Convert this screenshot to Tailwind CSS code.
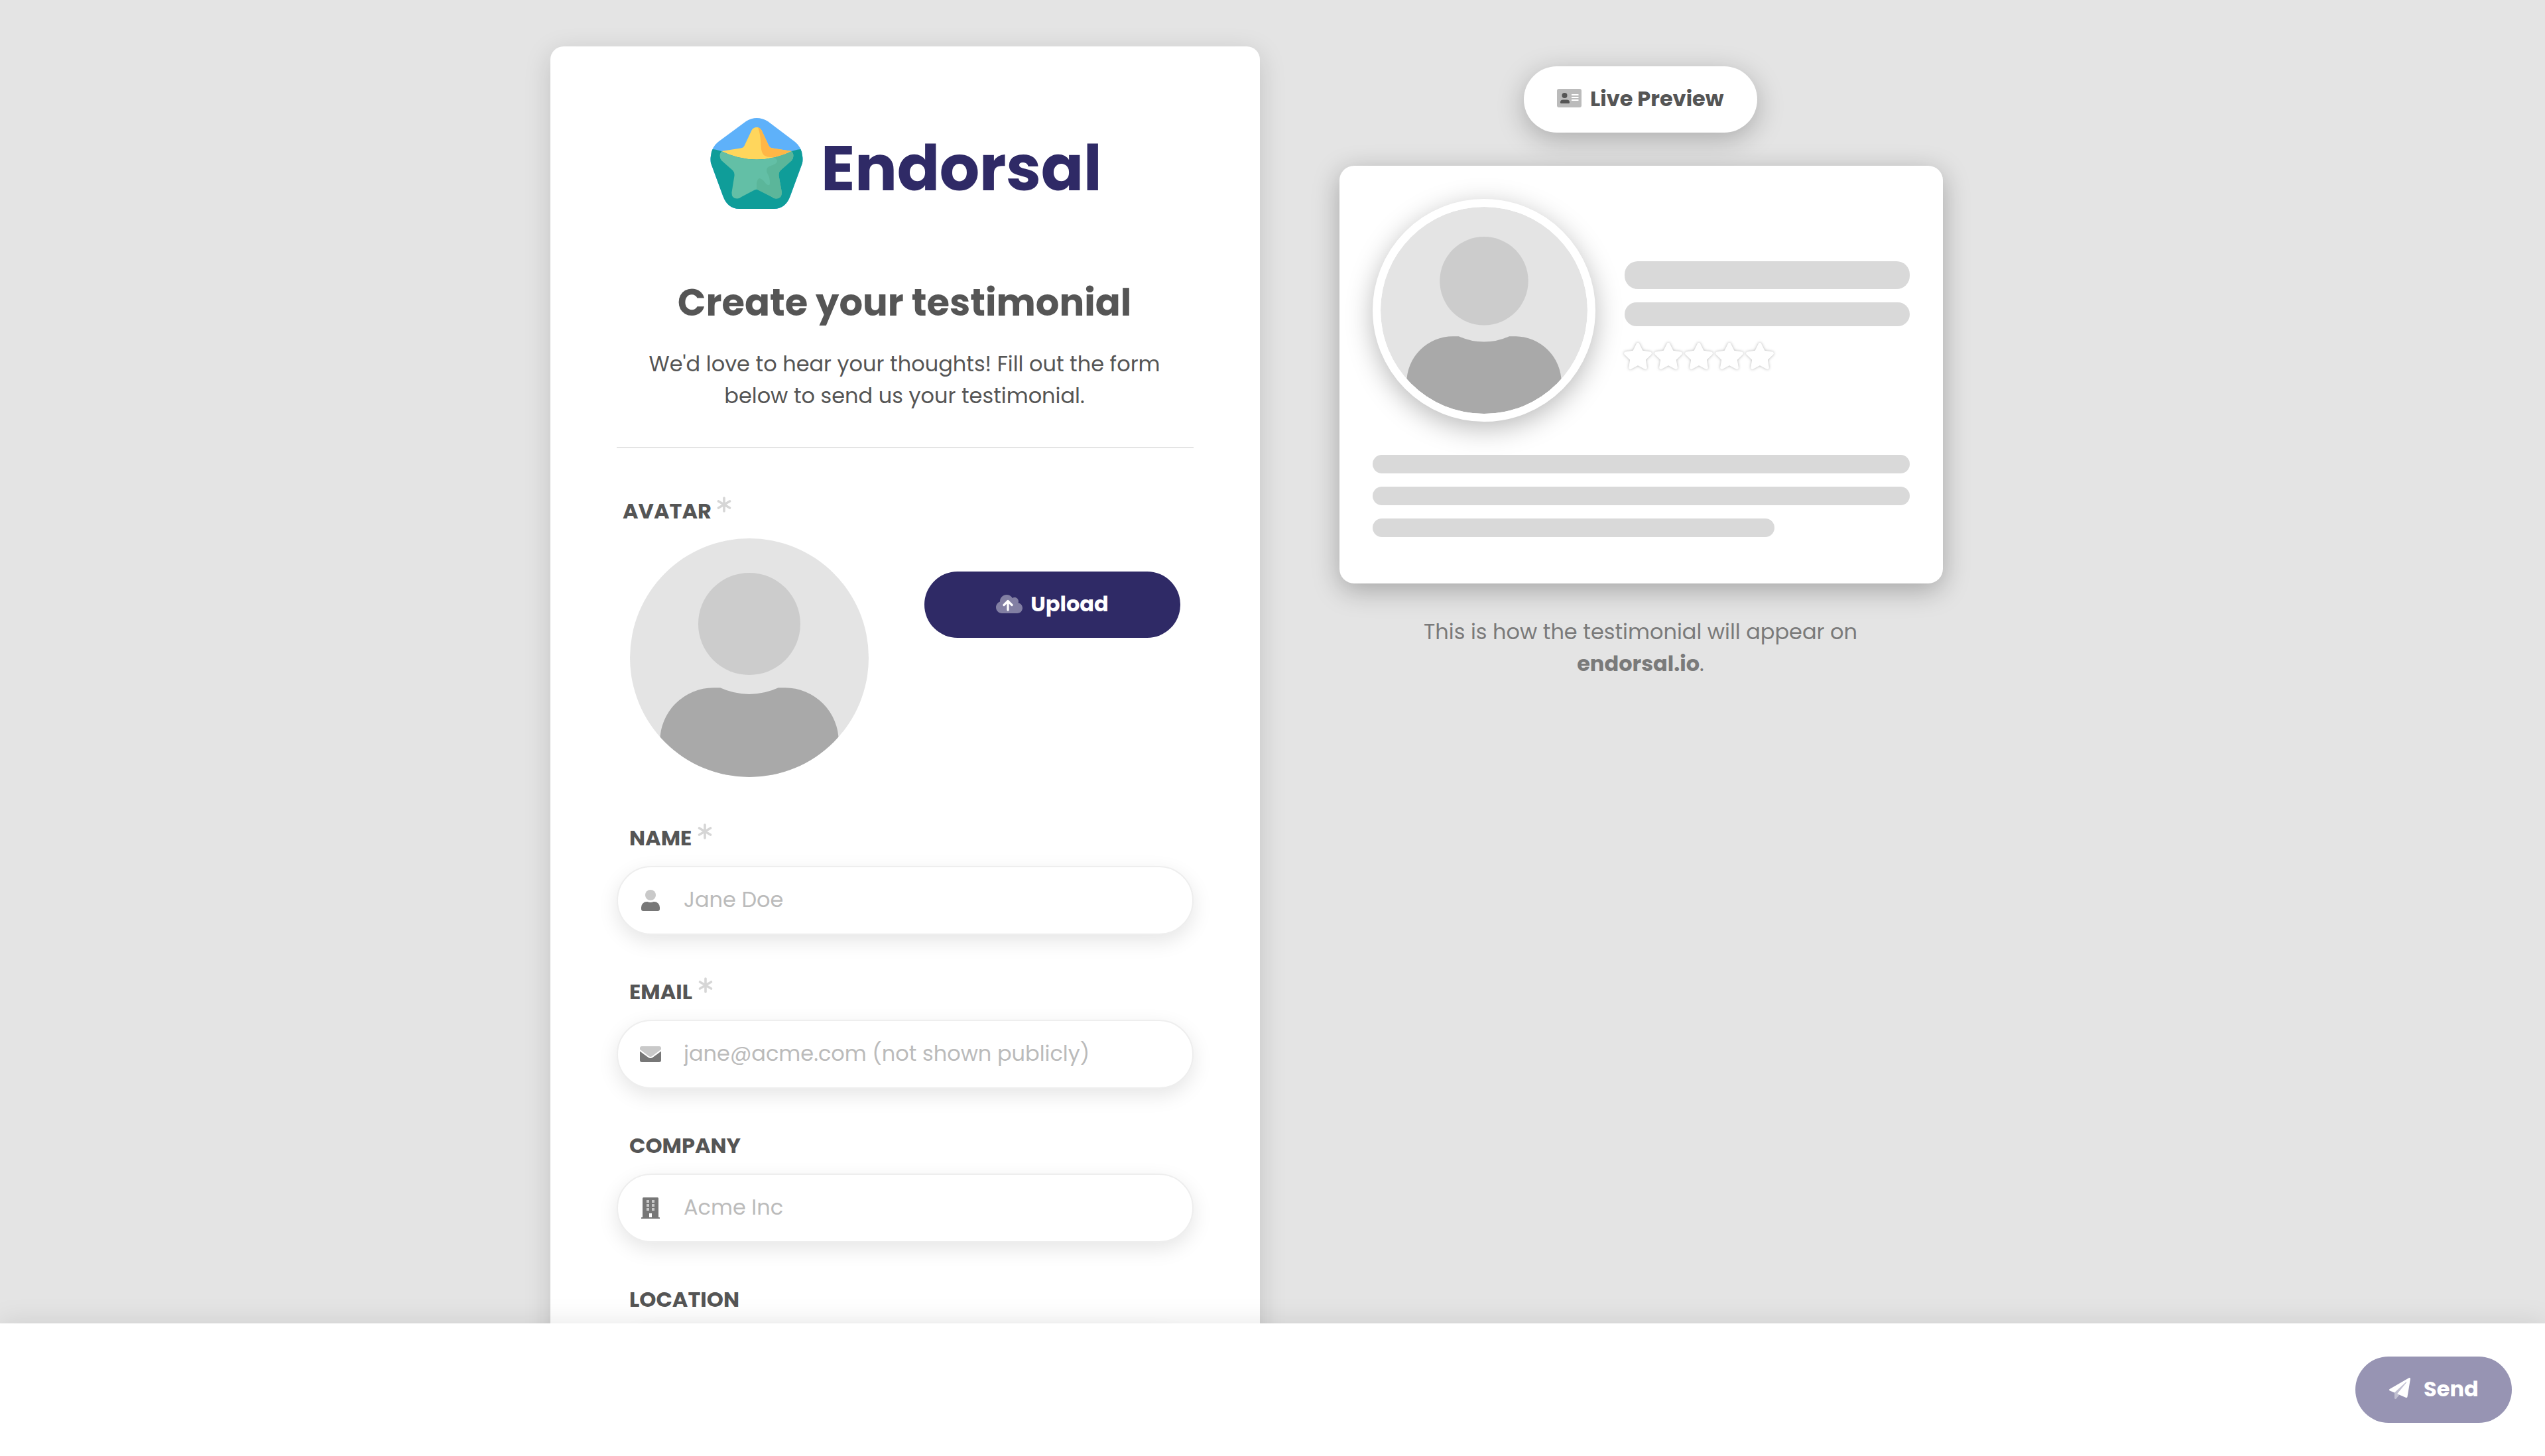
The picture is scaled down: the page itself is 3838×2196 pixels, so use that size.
<!DOCTYPE html>
<html lang="en">
<head>
  <meta charset="UTF-8" />
  <meta name="viewport" content="width=device-width, initial-scale=1.0" />
  <title>Create your testimonial</title>
  <script src="https://cdn.jsdelivr.net/npm/@tailwindcss/browser@4"></script>
</head>
<body class="bg-[#e4e4e4] h-screen overflow-hidden flex flex-col font-['Poppins','Inter',sans-serif] text-[32px] leading-[48px] text-[#555]">

  <!-- Shared shapes -->
  <svg class="hidden">
    <symbol id="asterisk" viewBox="0 0 22 24">
      <path d="M11 2v20M2.5 7l17 10M19.5 7l-17 10" fill="none" stroke="#d6d6d6" stroke-width="3.6" stroke-linecap="round" />
    </symbol>
    <symbol id="avatar" viewBox="0 0 360 360">
      <rect width="360" height="360" fill="#e4e4e4" />
      <g transform="translate(45.2 52) scale(.6016)">
        <circle cx="224" cy="128" r="128" fill="#ccc" />
        <path d="M313.6 288h-16.7a174.1 174.1 0 0 1-145.8 0h-16.7A134.4 134.4 0 0 0 0 422.4V560h448V422.4A134.4 134.4 0 0 0 313.6 288z" fill="#a9a9a9" />
      </g>
    </symbol>
    <symbol id="star" viewBox="0 0 576 512">
      <path d="M259.3 17.8L194 150.2 47.9 171.5c-26.2 3.8-36.7 36.1-17.7 54.6l105.7 103-25 145.5c-4.5 26.3 23.2 46 46.4 33.7L288 439.6l130.7 68.7c23.2 12.2 50.9-7.4 46.4-33.7l-25-145.5 105.7-103c19-18.5 8.5-50.8-17.7-54.6L382 150.2 316.7 17.8c-11.7-23.6-45.6-23.9-57.4 0z" fill="#fff" />
    </symbol>
  </svg>

  <main class="h-[1996px] shrink-0 overflow-hidden flex items-start gap-[120px] pl-[830px] pt-[70px]">

    <!-- Testimonial form -->
    <section class="w-[1070px] h-[2100px] shrink-0 bg-white rounded-[20px] shadow-[0_10px_40px_rgba(0,0,0,0.15)] px-[100px] pt-[108px]">
      <div class="flex items-start gap-[27px] ml-[141px] h-[137px]">
        <svg class="w-[140px] h-[137px] shrink-0" viewBox="0 0 140 137">
          <defs>
            <clipPath id="badge"><path d="M54 5Q70 -5 87 5L128 36Q138 44 139 57Q140 62 139 68L121 117Q114 137 96 137H44Q26 137 19 117L1 68Q0 62 1 57Q2 44 12 36Z" /></clipPath>
          </defs>
          <g clip-path="url(#badge)">
            <rect width="140" height="137" fill="#5eb1fa" />
            <path d="M0 46.5Q9 47 17 50Q42 62.5 70 62.5Q98 62.5 123 50Q131 47 140 46.5V137H0Z" fill="#0f9d99" />
            <path d="M17 50Q42 62.5 70 62.5Q98 62.5 123 50L94 45.5Q90 45 88.5 42L77.5 18.5Q75 14 70 14Q65 14 62.5 18.5L51.5 42Q50 45 46 45.5Z" fill="#ffd65c" />
            <path d="M72 14Q76 15 77.5 18.5L88.5 42Q90 45 94 45.5L123 50Q109 56.5 95 59.5Q84 59 81 56Q77 52 76.5 42Q76 24 72 14Z" fill="#ffb646" />
            <path d="M17 50Q42 62.5 70 62.5Q98 62.5 123 50Q128 57 123 64L106 79Q103 82 103.5 87L108 112Q108 122 99 121.5Q96 121.5 93 119L73 108.500Q70 107 67 108.5L47 119Q44 121.5 41 121.5Q32 122 32.5 112L36.5 87Q37 82 34 79L17 64Q12 57 17 50Z" fill="#63bfa6" />
            <path d="M96 59.5Q110 57 123 50Q128 57 123 64L106 79Q103 82 103.5 87L108 112Q108 122 99 121.5Q96 121.5 93 119L70 107.5V99Q71 91 75 91Q79 92 84 99Q90 104 90 98Q90 90 87 85Q82 76 90 72.5Q102 69 101 64Q100 61 96 59.5Z" fill="#5bb69a" />
          </g>
        </svg>
        <span class="mt-[28px] text-[95px] leading-[96px] tracking-[-0.4px] font-bold text-[#2f2a66]">Endorsal</span>
      </div>

      <h1 class="mt-[100px] -ml-[2px] text-center text-[56px] leading-[84px] font-bold">Create your testimonial</h1>
      <p class="mt-[26px] -ml-[2px] text-center">We'd love to hear your thoughts! Fill out the form<br />below to send us your testimonial.</p>
      <hr class="mt-[53px] border-0 h-[2px] bg-[#e4e4e4]" />

      <form>
        <!-- Avatar -->
        <div class="mt-[71px] ml-[9px] flex items-start gap-[8px] font-bold">
          <label>AVATAR</label>
          <svg class="mt-[2px] w-[22px] h-[24px]"><use href="#asterisk" /></svg>
        </div>
        <div class="mt-[17px] flex items-start justify-between px-[20px]">
          <div class="size-[360px] rounded-full overflow-hidden"><svg class="size-full"><use href="#avatar" /></svg></div>
          <button type="button" class="mt-[50px] w-[386px] h-[100px] rounded-full bg-[#2f2a66] text-white font-bold flex items-center justify-center gap-[12px]">
            <svg class="w-[40px] h-[32px] -mt-[3px]" viewBox="0 0 640 512">
              <path d="M537.6 226.6c4.1-10.7 6.4-22.4 6.4-34.6 0-53-43-96-96-96-19.7 0-38.1 6-53.3 16.2C367 64.2 315.3 32 256 32c-88.4 0-160 71.6-160 160 0 2.7.1 5.4.2 8.1C40.2 219.8 0 273.2 0 336c0 79.5 64.5 144 144 144h368c70.7 0 128-57.3 128-128 0-61.9-44-113.6-102.4-125.4z" fill="#fff" fill-opacity=".4" />
              <path d="M288 400V200M192 280l96-96 96 96" fill="none" stroke="#fff" stroke-width="52" stroke-linecap="round" stroke-linejoin="round" />
            </svg>
            <span class="-mt-[2px]">Upload</span>
          </button>
        </div>

        <!-- Name -->
        <div class="mt-[68px] ml-[19px] flex items-start gap-[9px] font-bold">
          <label for="name">NAME</label>
          <svg class="mt-[2px] w-[22px] h-[24px]"><use href="#asterisk" /></svg>
        </div>
        <div class="mt-[18px] h-[104px] rounded-[52px] border-2 border-[#eee] bg-white shadow-[0_10px_30px_rgba(0,0,0,0.1)] flex items-center pl-[35px]">
          <svg class="w-[28px] h-[32px] shrink-0" viewBox="0 0 448 512">
            <circle cx="224" cy="128" r="128" fill="#c9c9c9" />
            <path d="M313.6 288h-16.7a174.1 174.1 0 0 1-145.8 0h-16.7A134.4 134.4 0 0 0 0 422.4V464a48 48 0 0 0 48 48h352a48 48 0 0 0 48-48v-41.6A134.4 134.4 0 0 0 313.6 288z" fill="#777" />
          </svg>
          <input id="name" type="text" placeholder="Jane Doe" class="ml-[36px] -mt-[2px] w-[700px] outline-none placeholder:text-[#bbb]" />
        </div>

        <!-- Email -->
        <div class="mt-[62px] ml-[19px] flex items-start gap-[9px] font-bold">
          <label for="email">EMAIL</label>
          <svg class="mt-[2px] w-[22px] h-[24px]"><use href="#asterisk" /></svg>
        </div>
        <div class="mt-[18px] h-[104px] rounded-[52px] border-2 border-[#eee] bg-white shadow-[0_10px_30px_rgba(0,0,0,0.1)] flex items-center pl-[33px]">
          <svg class="size-[32px] shrink-0" viewBox="0 0 512 512">
            <path d="M464 64H48a48 48 0 0 0-48 48v19a24.08 24.08 0 0 0 9.2 18.9c30.6 23.9 40.7 32.4 173.4 128.7 16.8 12.2 50.2 41.8 73.4 41.4 23.2.4 56.6-29.2 73.4-41.4 132.7-96.3 142.8-104.7 173.4-128.7A23.93 23.93 0 0 0 512 131v-19a48 48 0 0 0-48-48z" fill="#c9c9c9" />
            <path d="M256.47 352h-.94c-30.1 0-60.41-23.42-82.54-40.52C169.39 308.7 24.77 202.7 0 183.33V400a48 48 0 0 0 48 48h416a48 48 0 0 0 48-48V183.36c-24.46 19.17-169.4 125.34-173 128.12-22.12 17.1-52.43 40.52-82.53 40.52z" fill="#777" />
          </svg>
          <input id="email" type="email" placeholder="jane@acme.com (not shown publicly)" class="ml-[34px] -mt-[2px] w-[700px] outline-none placeholder:text-[#bbb]" />
        </div>

        <!-- Company -->
        <div class="mt-[62px] ml-[19px] font-bold"><label for="company">COMPANY</label></div>
        <div class="mt-[18px] h-[104px] rounded-[52px] border-2 border-[#eee] bg-white shadow-[0_10px_30px_rgba(0,0,0,0.1)] flex items-center pl-[35px]">
          <svg class="w-[28px] h-[32px] shrink-0" viewBox="0 0 448 512">
            <path d="M128 64h64v64h-64zM256 64h64v64h-64zM128 160h64v64h-64zM256 160h64v64h-64zM128 256h64v64h-64zM256 256h64v64h-64z" fill="#c9c9c9" />
            <path fill-rule="evenodd" d="M436 480h-20V24a24 24 0 0 0-24-24H56a24 24 0 0 0-24 24v456H12a12 12 0 0 0-12 12v20h448v-20a12 12 0 0 0-12-12zM128 64h64v64h-64zM256 64h64v64h-64zM128 160h64v64h-64zM256 160h64v64h-64zM128 256h64v64h-64zM256 256h64v64h-64zM192 384h64v96h-64z" fill="#777" />
          </svg>
          <input id="company" type="text" placeholder="Acme Inc" class="ml-[36px] -mt-[2px] w-[700px] outline-none placeholder:text-[#bbb]" />
        </div>

        <!-- Location -->
        <div class="mt-[62px] ml-[19px] font-bold"><label for="location">LOCATION</label></div>
        <div class="mt-[18px] h-[104px] rounded-[52px] border-2 border-[#eee] bg-white shadow-[0_10px_30px_rgba(0,0,0,0.1)]">
          <input id="location" type="text" class="w-[700px] outline-none" />
        </div>
      </form>
    </section>

    <!-- Live preview -->
    <aside class="w-[910px] shrink-0 pt-[30px] flex flex-col items-center">
      <div class="-ml-[2px] w-[352px] h-[100px] rounded-full bg-white shadow-[0_10px_40px_rgba(0,0,0,0.25)] flex items-center pl-[50px] font-bold">
        <svg class="w-[37px] h-[28px] -mt-[4px]" viewBox="0 0 37 28">
          <rect width="37" height="28" rx="3" fill="#bbb" />
          <circle cx="11.500" cy="10" r="4" fill="#555" />
          <path d="M5 20.5q0-4 4-4h6q4 0 4 4q0 1.5-1.5 1.5h-11q-1.5 0-1.5-1.5z" fill="#555" />
          <path d="M22 9h10.500M22 13h10.500M22 17h10.500" stroke="#fff" stroke-width="2" />
        </svg>
        <span class="ml-[13px] -mt-[2px] whitespace-nowrap">Live Preview</span>
      </div>

      <div class="mt-[50px] w-[910px] h-[630px] rounded-[22px] bg-white shadow-[0_10px_40px_rgba(0,0,0,0.28)] p-[50px]">
        <div class="flex items-start gap-[44px]">
          <div class="size-[336px] shrink-0 rounded-full border-[12px] border-white bg-white overflow-hidden shadow-[0_10px_40px_rgba(0,0,0,0.28)]"><svg class="size-[312px] rounded-full"><use href="#avatar" /></svg></div>
          <div class="flex-1 pt-[94px]">
            <div class="h-[42px] rounded-[20px] bg-[#d9d9d9]"></div>
            <div class="mt-[20px] h-[36px] rounded-[18px] bg-[#d9d9d9]"></div>
            <div class="mt-[25px] -ml-[3px] flex">
              <svg class="w-[46px] h-[40px] drop-shadow-[0_0_2px_rgba(0,0,0,0.3)]"><use href="#star" /></svg>
              <svg class="w-[46px] h-[40px] drop-shadow-[0_0_2px_rgba(0,0,0,0.3)]"><use href="#star" /></svg>
              <svg class="w-[46px] h-[40px] drop-shadow-[0_0_2px_rgba(0,0,0,0.3)]"><use href="#star" /></svg>
              <svg class="w-[46px] h-[40px] drop-shadow-[0_0_2px_rgba(0,0,0,0.3)]"><use href="#star" /></svg>
              <svg class="w-[46px] h-[40px] drop-shadow-[0_0_2px_rgba(0,0,0,0.3)]"><use href="#star" /></svg>
            </div>
          </div>
        </div>
        <div class="mt-[50px] flex flex-col gap-[20px]">
          <div class="h-[28px] rounded-full bg-[#d9d9d9]"></div>
          <div class="h-[28px] rounded-full bg-[#d9d9d9]"></div>
          <div class="h-[28px] w-[606px] rounded-full bg-[#d9d9d9]"></div>
        </div>
      </div>

      <p class="mt-[49px] -ml-[2px] text-center text-[#7a7a7a]">This is how the testimonial will appear on<br /><b>endorsal.io</b>.</p>
    </aside>
  </main>

  <!-- Bottom bar -->
  <footer class="relative h-[200px] shrink-0 bg-white shadow-[0_0_40px_rgba(0,0,0,0.1)] flex justify-end pt-[50px] pr-[50px]">
    <button type="button" class="w-[236px] h-[100px] rounded-full bg-[#9794b3] text-white font-bold flex items-center pl-[51px]">
      <svg class="size-[32px] -mt-[4px] shrink-0" viewBox="0 0 512 512">
        <path d="M245.53 410.5l-75 92.83c-14 17.1-42.5 7.8-42.5-15.8V358l280.26-252.77c5.5-4.9 13.3 2.6 8.6 8.3L191.72 387.87z" fill="#fff" fill-opacity=".4" />
        <path d="M511.59 28l-72 432a24.07 24.07 0 0 1-33 18.2l-214.87-90.33 225.17-274.34c4.7-5.7-3.1-13.2-8.6-8.3L128 358 14.69 313.83a24 24 0 0 1-2.2-43.2L476 3.23c17.29-10 39 4.6 35.59 24.77z" fill="#fff" />
      </svg>
      <span class="ml-[20px] -mt-[2px]">Send</span>
    </button>
  </footer>
</body>
</html>
